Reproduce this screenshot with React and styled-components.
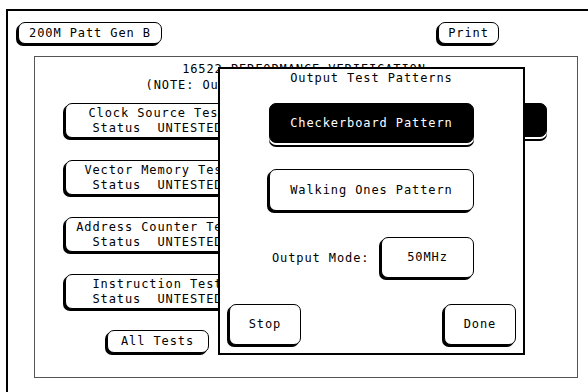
import React from 'react';
import styled, { createGlobalStyle } from 'styled-components';

const GlobalStyle = createGlobalStyle`
  html, body {
    margin: 0;
    padding: 0;
    background: #fff;
    overflow: hidden;
  }
  body {
    font-family: "DejaVu Sans Mono", "Liberation Mono", monospace;
    font-size: 12px;
    letter-spacing: 0.9px;
    color: #000;
  }
`;

const Frame = styled.div`
  margin: 9px 0 0 6px;
  width: 582px;
  height: 383px;
  box-sizing: border-box;
  border-top: 2px solid #000;
  border-left: 2px solid #000;
  padding: 11px 89px 0 10px;
`;

const Header = styled.div`
  display: flex;
  justify-content: space-between;
  align-items: flex-start;
`;

// softkey with the drop shadow on the left and bottom
const Key = styled.button`
  box-sizing: border-box;
  width: ${({ $w }) => $w}px;
  height: ${({ $h }) => $h}px;
  padding: 0;
  margin: 0;
  border: 1px solid #000;
  border-radius: 7px;
  background: ${({ $active }) => ($active ? '#000' : '#fff')};
  color: ${({ $active }) => ($active ? '#fff' : '#000')};
  box-shadow: ${({ $active }) =>
    $active ? '0 2px 0 #fff, 0 4px 0 #000' : '-2px 2px 0 #000'};
  font: inherit;
  letter-spacing: inherit;
  line-height: 15px;
  white-space: pre;
  display: flex;
  flex-direction: column;
  align-items: center;
  justify-content: center;
  cursor: pointer;
`;

const Panel = styled.div`
  position: relative;
  box-sizing: border-box;
  margin: 12px 0 0 16px;
  width: 544px;
  height: 322px;
  border: 1px solid #555;
`;

const Title = styled.div`
  padding-top: 4px;
  line-height: 16px;
  text-align: center;
  white-space: pre;
  margin-left: -4px;
`;

const Body = styled.div`
  margin-top: 10px;
  display: flex;
  justify-content: space-between;
  align-items: flex-start;
  padding: 0 30px 0 30px;
`;

const TestColumn = styled.div`
  display: flex;
  flex-direction: column;
  align-items: center;
  gap: 22px;
`;

const AllTests = styled(Key)`
  margin-top: -1px;
`;

const Dialog = styled.div`
  position: absolute;
  left: 183px;
  top: 10px;
  width: 307px;
  height: 288px;
  box-sizing: border-box;
  border: 2px solid #000;
  background: #fff;
  display: flex;
  flex-direction: column;
  align-items: center;
`;

const DialogTitle = styled.div`
  padding-top: 1px;
  line-height: 16px;
  margin-bottom: 17px;
`;

const Options = styled.div`
  align-self: stretch;
  display: flex;
  flex-direction: column;
  align-items: center;
  gap: 26px;
`;

const ModeRow = styled.div`
  width: 205px;
  height: 41px;
  display: flex;
  align-items: center;
  justify-content: space-between;
`;

const ModeLabel = styled.span`
  padding-left: 3px;
`;

const Actions = styled.div`
  align-self: stretch;
  display: flex;
  justify-content: space-between;
  padding: 0 7px 0 9px;
`;

const tests = [
  'Clock Source Test',
  'Vector Memory Test',
  'Address Counter Test',
  'Instruction Test',
];

export default function App() {
  return (
    <>
      <GlobalStyle />
      <Frame>
        <Header>
          <Key $w={144} $h={22}>200M Patt Gen B</Key>
          <Key $w={61} $h={22}>Print</Key>
        </Header>
        <Panel>
          <Title>
            {'16522 PERFORMANCE VERIFICATION\n(NOTE: Outputs are driven during tests)'}
          </Title>
          <Body>
            <TestColumn>
              {tests.map(name => (
                <Key key={name} $w={185} $h={35}>
                  <span>{name}</span>
                  <span>{'Status  UNTESTED'}</span>
                </Key>
              ))}
              <AllTests $w={102} $h={23}>All Tests</AllTests>
            </TestColumn>
            {/* selected key behind the dialog, only its right end shows */}
            <Key $w={170} $h={34} $active aria-label="Output Test Patterns" />
          </Body>
          <Dialog>
            <DialogTitle>Output Test Patterns</DialogTitle>
            <Options>
              <Key $w={205} $h={40} $active>Checkerboard Pattern</Key>
              <Key $w={205} $h={42}>Walking Ones Pattern</Key>
              <ModeRow>
                <ModeLabel>Output Mode:</ModeLabel>
                <Key $w={93} $h={41}>50MHz</Key>
              </ModeRow>
              <Actions>
                <Key $w={72} $h={41}>Stop</Key>
                <Key $w={72} $h={41}>Done</Key>
              </Actions>
            </Options>
          </Dialog>
        </Panel>
      </Frame>
    </>
  );
}
